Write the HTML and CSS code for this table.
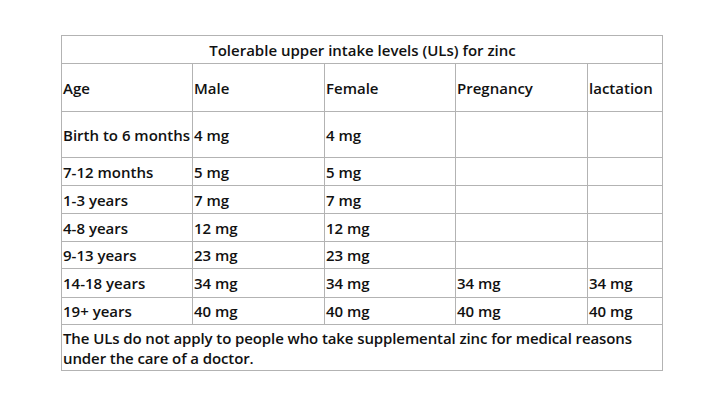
FILE: index.html
```html
<!DOCTYPE html>
<html>
<head>
<meta charset="utf-8">
<link rel="stylesheet" href="styles.css">
</head>
<body>
<div class="page">
<table class="ul-table">
  <colgroup>
    <col class="c1"><col class="c2"><col class="c3"><col class="c4"><col class="c5">
  </colgroup>
  <tr class="r-title"><td colspan="5" class="title">Tolerable upper intake levels (ULs) for zinc</td></tr>
  <tr class="r-head"><td>Age</td><td>Male</td><td>Female</td><td>Pregnancy</td><td>lactation</td></tr>
  <tr class="r-tall"><td>Birth to 6 months</td><td>4 mg</td><td>4 mg</td><td></td><td></td></tr>
  <tr class="r-a"><td>7-12 months</td><td>5 mg</td><td>5 mg</td><td></td><td></td></tr>
  <tr class="r-a"><td>1-3 years</td><td>7 mg</td><td>7 mg</td><td></td><td></td></tr>
  <tr class="r-a"><td>4-8 years</td><td>12 mg</td><td>12 mg</td><td></td><td></td></tr>
  <tr class="r-b"><td>9-13 years</td><td>23 mg</td><td>23 mg</td><td></td><td></td></tr>
  <tr class="r-c"><td>14-18 years</td><td>34 mg</td><td>34 mg</td><td>34 mg</td><td>34 mg</td></tr>
  <tr class="r-b"><td>19+ years</td><td>40 mg</td><td>40 mg</td><td>40 mg</td><td>40 mg</td></tr>
  <tr class="r-note"><td colspan="5" class="note">The ULs do not apply to people who take supplemental zinc for medical reasons under the care of a doctor.</td></tr>
</table>
</div>
</body>
</html>
```
FILE: styles.css
```css
html, body {
  margin: 0;
  padding: 0;
  background: #ffffff;
}
.page {
  width: 720px;
  height: 406px;
  padding: 35px 0 0 61px;
  box-sizing: border-box;
}
.ul-table {
  border-collapse: collapse;
  table-layout: fixed;
  width: 601px;
  font-family: "Open Sans", "Liberation Sans", sans-serif;
  font-weight: 600;
  font-size: 15px;
  color: #111111;
}
.c1 { width: 131px; }
.c2 { width: 132px; }
.c3 { width: 131px; }
.c4 { width: 132px; }
.c5 { width: 75px; }
.ul-table td {
  border: 1px solid #b3b3b3;
  padding: 0 0 0 1px;
  vertical-align: middle;
  white-space: nowrap;
  overflow: hidden;
  line-height: 20px;
}
.ul-table td.title {
  text-align: center;
}
.ul-table td.note {
  white-space: normal;
  padding: 1px 0 0 1px;
  letter-spacing: -0.1px;
}
.r-title td { height: 27px; }
.r-head td { height: 47px; }
.r-tall td { height: 45px; }
.r-a td { height: 27px; }
.r-b td { height: 26px; }
.r-c td { height: 28px; }
.r-note td { height: 44px; }
```
